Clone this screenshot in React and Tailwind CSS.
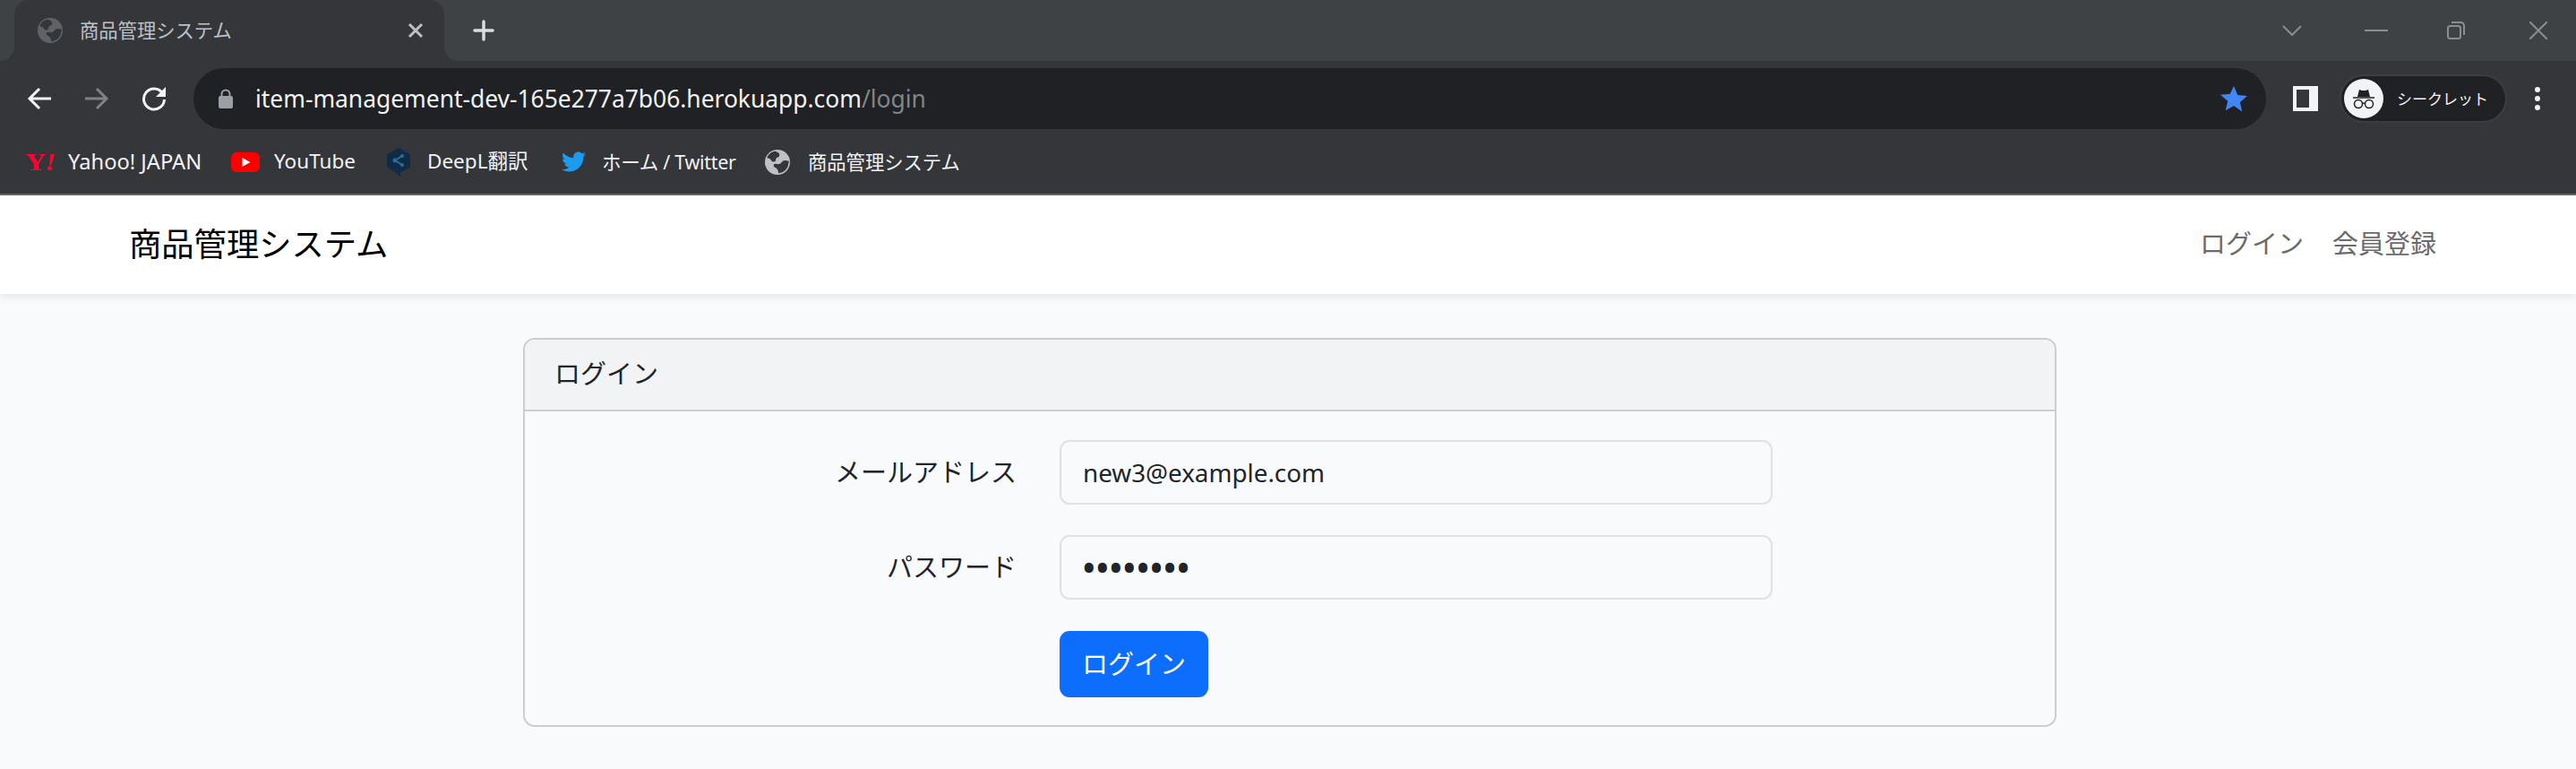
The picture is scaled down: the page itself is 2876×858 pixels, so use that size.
import { FaTwitter } from 'react-icons/fa';

const Globe = ({ color, hole, size }) => (
  <svg width={size} height={size} viewBox="0 0 24 24">
    <circle cx="12" cy="12" r="12" fill={color} />
    <path d="M10 1.500C6 2 3 4.500 2 8c2 0 3 1 4 2 1 2 3 2 4 1 1-1 0-2 1-3 1-.5 3-1 3-3 0-1.500-2-3-4-3.500z" fill={hole} />
    <path d="M22.500 11c-2-1-4-1-5.500 0-1 1-2 3-4 3-2-.5-3-1-4.500 0-.5 1 0 2.500 1 3 2 .5 3 2 3.500 5.500 5-.5 9-4 9.500-9 .5-1 .5-2 .5-2.500z" fill={hole} />
  </svg>
);

const Bookmark = ({ icon, label, gap, width, size }) => (
  <div className={`flex items-center shrink-0 ${width}`}>
    <div className={`flex items-center justify-start shrink-0 ${gap}`}>{icon}</div>
    <span className={`${size} text-[#f1f3f4] whitespace-nowrap leading-none`}>{label}</span>
  </div>
);

function TabStrip() {
  return (
    <div className="flex h-[68px] bg-[#35363a]">
      <div className="w-4 bg-[#3e4245] rounded-br-[16px]" />
      <div className="w-[480px] bg-[#3e4245]">
        <div className="h-full bg-[#35363a] rounded-t-[16px] flex items-center pl-[26px] pr-[22px]">
          <Globe size={28} color="#5f6368" hole="#35363a" />
          <span className="ml-[19px] text-[21.3px] leading-none text-[#bdc1c6] whitespace-nowrap">商品管理システム</span>
          <svg className="ml-auto" width="20" height="20" viewBox="0 0 20 20" stroke="#bdc1c6" strokeWidth="3">
            <path d="M3 3l14 14M17 3L3 17" />
          </svg>
        </div>
      </div>
      <div className="flex-1 bg-[#3e4245] rounded-bl-[16px] flex items-center pl-[32px] pr-[32px]">
        <svg width="24" height="24" viewBox="0 0 24 24" stroke="#dadce0" strokeWidth="3.500" strokeLinecap="round">
          <path d="M12 2v20M2 12h20" />
        </svg>
        <div className="ml-auto flex items-center">
          <svg width="22" height="12" viewBox="0 0 22 12" fill="none" stroke="#8a8d90" strokeWidth="2">
            <path d="M1 1l10 10L21 1" />
          </svg>
          <svg className="ml-[70px]" width="26" height="2" viewBox="0 0 26 2" stroke="#8a8d90" strokeWidth="2">
            <path d="M0 1h26" />
          </svg>
          <svg className="ml-[66px]" width="20" height="20" viewBox="0 0 20 20" fill="none" stroke="#8a8d90" strokeWidth="2">
            <rect x="1" y="5" width="14" height="14" rx="2.500" />
            <path d="M5 1h10.500A3.500 3.500 0 0 1 19 4.500V15" />
          </svg>
          <svg className="ml-[72px]" width="20" height="20" viewBox="0 0 20 20" stroke="#8a8d90" strokeWidth="2">
            <path d="M0 0l20 20M20 0L0 20" />
          </svg>
        </div>
      </div>
    </div>
  );
}

function Toolbar() {
  return (
    <div className="flex items-center h-[68px] mt-2 pl-[30px]">
      <svg width="28" height="26" viewBox="0 0 28 26" fill="none" stroke="#f1f3f4" strokeWidth="3">
        <path d="M27 13H3M14 2L3 13l11 11" />
      </svg>
      <svg className="ml-9" width="28" height="26" viewBox="0 0 28 26" fill="none" stroke="#7f8184" strokeWidth="3">
        <path d="M1 13h24M14 2l11 11-11 11" />
      </svg>
      <svg className="ml-9" width="28" height="28" viewBox="0 0 28 28" fill="none">
        <path d="M23.500 8A11.500 11.500 0 1 0 25.500 15" stroke="#f1f3f4" strokeWidth="3" />
        <path d="M27 1v11H16z" fill="#f1f3f4" />
      </svg>
      <div className="ml-[30px] w-[2314px] h-[68px] rounded-[34px] bg-[#202124] flex items-center pl-[28px] pr-[21px]">
        <svg width="16" height="22" viewBox="0 0 16 22">
          <path d="M3.500 9V6a4.500 4.500 0 0 1 9 0v3" fill="none" stroke="#9aa0a6" strokeWidth="2" />
          <rect x="0" y="8" width="16" height="14" rx="2" fill="#9aa0a6" />
        </svg>
        <span className="ml-[25px] text-[26.4px] leading-none whitespace-nowrap text-[#f1f3f4]">
          item-management-dev-165e277a7b06.herokuapp.com<span className="text-[#80868b]">/login</span>
        </span>
        <svg className="ml-auto" width="30" height="30" viewBox="0 0 24 24" fill="#4285f4">
          <path d="M12 .8l3.400 7.900 8.600.8-6.500 5.700 1.900 8.400L12 18.400l-7.400 4.200 1.900-8.400L0 8.500l8.600-.8z" />
        </svg>
      </div>
      <div className="ml-[30px] w-7 h-7 bg-[#f1f3f4] flex items-center pl-[4px]">
        <div className="w-[14px] h-5 bg-[#35363a]" />
      </div>
      <div className="ml-6 w-[187px] h-[54px] rounded-[27px] bg-[#202124] border-2 border-[#3c3d41] flex items-center pl-[3px]">
        <div className="w-11 h-11 rounded-full bg-[#f1f3f4] flex items-center justify-center">
          <svg width="28" height="28" viewBox="0 0 28 28" fill="none" stroke="#202124">
            <path d="M7 12l2-8 3 1h4l3-1 2 8z" fill="#202124" stroke="none" />
            <path d="M2 13h24" strokeWidth="1.500" />
            <circle cx="8" cy="20" r="4.500" strokeWidth="1.500" />
            <circle cx="20" cy="20" r="4.500" strokeWidth="1.500" />
            <path d="M12.500 19.500c1-.7 2-.7 3 0" strokeWidth="1.500" />
          </svg>
        </div>
        <span className="ml-[15px] text-[17px] leading-none text-[#f1f3f4] whitespace-nowrap">シークレット</span>
      </div>
      <div className="ml-[31px] flex flex-col gap-1">
        <div className="w-[6px] h-[6px] rounded-full bg-[#f1f3f4]" />
        <div className="w-[6px] h-[6px] rounded-full bg-[#f1f3f4]" />
        <div className="w-[6px] h-[6px] rounded-full bg-[#f1f3f4]" />
      </div>
    </div>
  );
}

function BookmarkBar() {
  return (
    <div className="flex items-center h-[64px] pl-[28px] pt-[9px]">
      <Bookmark
        width="w-[230px]"
        gap="w-[48px]"
        size="text-[23.700px]"
        label="Yahoo! JAPAN"
        icon={
          <span className="inline-block origin-left scale-x-[1.15] font-['Liberation_Serif',serif] font-bold text-[28px] leading-none text-[#ff0033] tracking-tighter">
            Y<span className="italic">!</span>
          </span>
        }
      />
      <Bookmark
        width="w-[173px]"
        gap="w-[48px]"
        size="text-[22.500px]"
        label="YouTube"
        icon={
          <svg width="32" height="22" viewBox="0 0 32 22">
            <rect width="32" height="22" rx="6" fill="#ff0000" />
            <path d="M12.500 6l9 5-9 5z" fill="#fff" />
          </svg>
        }
      />
      <Bookmark
        width="w-[196px]"
        gap="w-[46px]"
        size="text-[22.500px]"
        label="DeepL翻訳"
        icon={
          <svg width="28" height="32" viewBox="0 0 28 32">
            <path d="M14 0l13 7.500v14L16 27.500 16.500 32 12 28.500 1 21.500v-14z" fill="#0f2b46" />
            <path d="M10 14l8-5M10 14l8 5" stroke="#2d6c97" strokeWidth="2" />
            <circle cx="10" cy="14" r="2.500" fill="#2d6c97" />
            <circle cx="18" cy="9" r="2" fill="#2d6c97" />
            <circle cx="18" cy="19" r="2" fill="#2d6c97" />
          </svg>
        }
      />
      <Bookmark
        width="w-[227px]"
        gap="w-[45px]"
        size="text-[21.500px] tracking-[-0.3px]"
        label="ホーム / Twitter"
        icon={<FaTwitter size={27} color="#1d9bf0" />}
      />
      <Bookmark
        width="w-[220px]"
        gap="w-[48px]"
        size="text-[21.300px]"
        label="商品管理システム"
        icon={<Globe size={28} color="#bdc1c6" hole="#35363a" />}
      />
    </div>
  );
}

function FormRow({ label, type, value, inputClass }) {
  return (
    <div className="flex items-center">
      <label className="w-[597px] pr-[48px] text-right text-[#212529]">{label}</label>
      <input
        type={type}
        defaultValue={value}
        readOnly
        className={`w-[796px] h-[72px] px-6 bg-[#f9fafc] border-2 border-[#dee2e6] rounded-[11px] text-[#212529] outline-none ${inputClass}`}
      />
    </div>
  );
}

export default function App() {
  return (
    <div className="w-[2876px] h-[858px] overflow-hidden bg-[#f9fafc] text-[29px] font-['Noto_Sans','Noto_Sans_CJK_JP',sans-serif]">
      <div className="h-[218px] bg-[#35363a] border-b-2 border-[#5f6368]">
        <TabStrip />
        <Toolbar />
        <BookmarkBar />
      </div>

      <nav className="h-[110px] pb-[2px] bg-white shadow-[0_4px_8px_rgba(0,0,0,0.075)] flex items-center pl-[144px] pr-[156px]">
        <span className="text-[36.3px] text-black">商品管理システム</span>
        <div className="ml-auto flex gap-[32px] text-[#6b6b6b]">
          <span>ログイン</span>
          <span>会員登録</span>
        </div>
      </nav>

      <div className="mt-[49px] ml-[584px] w-[1712px] h-[434px] border-2 border-[#cccdce] rounded-[13px] overflow-hidden">
        <div className="h-[80px] pb-[2px] bg-[#f2f3f4] border-b-2 border-[#cccdce] flex items-center pl-[33px] text-[#212529]">
          ログイン
        </div>
        <div className="pt-[32px] flex flex-col gap-[34px]">
          <FormRow label="メールアドレス" type="email" value="new3@example.com" inputClass="text-[27.8px]" />
          <FormRow label="パスワード" type="password" value="password" inputClass="text-[36px] font-bold tracking-[1.5px]" />
          <div className="pl-[597px] mt-[1px]">
            <button className="w-[166px] h-[74px] rounded-[11px] bg-[#0d6efd] text-white">ログイン</button>
          </div>
        </div>
      </div>
    </div>
  );
}
